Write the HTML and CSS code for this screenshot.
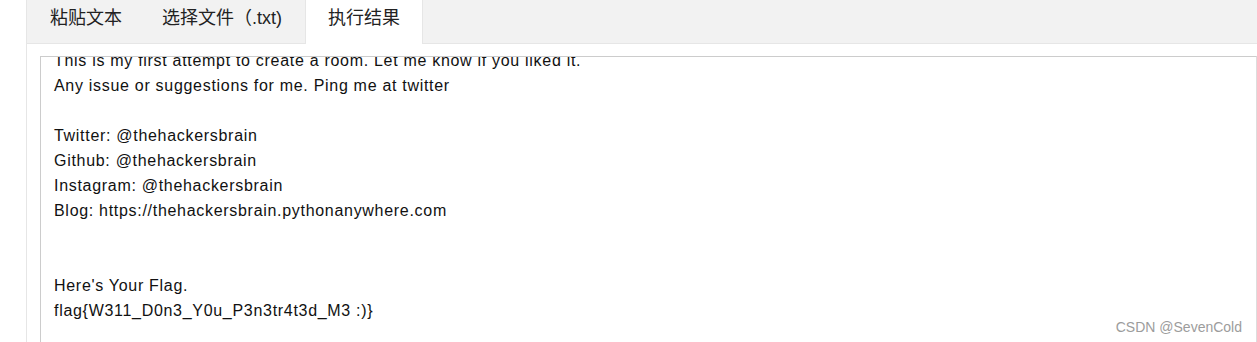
FILE: index.html
```html
<!DOCTYPE html>
<html lang="zh-CN">
<head>
<meta charset="utf-8">
<title>执行结果</title>
<link rel="stylesheet" href="styles.css">
</head>
<body>
<div class="page">
  <div class="tab-card">
    <ul class="tab-title">
      <li class="tab tab-first">粘贴文本</li>
      <li class="tab">选择文件（.txt)</li>
      <li class="tab tab-active">执行结果</li>
    </ul>
    <div class="tab-content">
      <div class="result-box">
        <div class="result-text">This is my first attempt to create a room. Let me know if you liked it.
Any issue or suggestions for me. Ping me at twitter

Twitter: @thehackersbrain
Github: @thehackersbrain
Instagram: @thehackersbrain
Blog: https://thehackersbrain.pythonanywhere.com


Here's Your Flag.
flag{W311_D0n3_Y0u_P3n3tr4t3d_M3 :)}
</div>
      </div>
    </div>
  </div>
  <div class="watermark">CSDN @SevenCold</div>
</div>
</body>
</html>
```
FILE: styles.css
```css
html, body {
  margin: 0;
  padding: 0;
  background: #fff;
  overflow: hidden;
}

.page {
  position: relative;
  width: 1257px;
  height: 342px;
  overflow: hidden;
  padding-left: 26px;
  box-sizing: border-box;
}

.tab-card {
  border-left: 1px solid #e6e6e6;
  height: 100%;
}

.tab-title {
  display: flex;
  margin: 0;
  padding: 0;
  list-style: none;
  height: 43px;
  background: #f2f2f2;
  border-bottom: 1px solid #e6e6e6;
}

.tab {
  height: 43px;
  line-height: 36px;
  padding: 0 20px;
  font-family: "Liberation Sans", "Noto Sans CJK SC", sans-serif;
  font-size: 18px;
  color: #222;
  box-sizing: border-box;
  white-space: nowrap;
}

.tab-first {
  margin-left: 3px;
}

.tab-active {
  margin-left: 3px;
  padding: 0 22px;
  background: #fff;
  height: 44px;
  border-left: 1px solid #e6e6e6;
  border-right: 1px solid #e6e6e6;
}

.tab-content {
  padding: 12px 0 0 13px;
}

.result-box {
  border: 1px solid #cccccc;
  border-right-color: #dddddd;
  height: 400px;
  overflow: hidden;
}

.result-text {
  margin-top: -9px;
  padding: 0 13px;
  white-space: pre;
  font-family: "Liberation Sans", Arial, sans-serif;
  font-size: 16px;
  letter-spacing: 0.7px;
  line-height: 25px;
  color: #111;
}

.watermark {
  position: absolute;
  right: 15px;
  bottom: 7px;
  font-family: "Liberation Sans", Arial, sans-serif;
  font-size: 14px;
  color: #9c9c9c;
}
```
